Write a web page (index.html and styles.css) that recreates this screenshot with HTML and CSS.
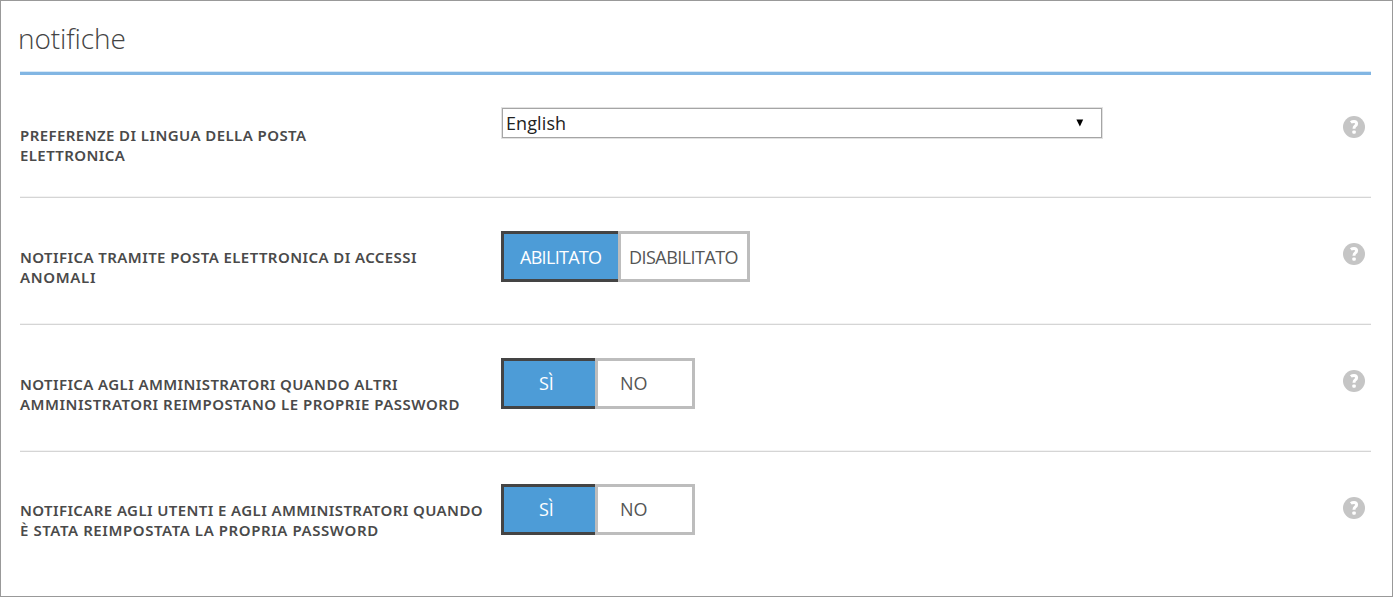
FILE: index.html
```html
<!DOCTYPE html>
<html lang="it">
<head>
<meta charset="utf-8">
<title>notifiche</title>
<link rel="stylesheet" href="styles.css">
</head>
<body>
<main class="panel">
  <h1 class="title"><span class="title-text">notifiche</span></h1>
  <section class="row row-language">
    <div class="label"><span class="l1">PREFERENZE DI LINGUA DELLA POSTA</span><br><span class="l2">ELETTRONICA</span></div>
    <div class="select"><span class="value">English</span><svg class="arrow" width="8" height="8" viewBox="0 0 8 8"><path d="M.4 .4H7.2L3.9 7.6Z"/></svg></div>
    <svg class="help" viewBox="0 0 22 22"><circle cx="11" cy="11" r="11"/><path d="M7.8 6.4Q9.2 5.4 11 5.4Q13.6 5.4 13.6 7.7Q13.6 9 12.2 9.9Q11 10.7 11 12.7"/><rect x="9.3" y="14.4" width="3.5" height="3.4" rx="1.2"/></svg>
  </section>
  <section class="row row-signin">
    <div class="label"><span class="l3">NOTIFICA TRAMITE POSTA ELETTRONICA DI ACCESSI</span><br><span class="l4">ANOMALI</span></div>
    <div class="toggle wide"><div class="on"><span>ABILITATO</span></div><div class="off"><span>DISABILITATO</span></div></div>
    <svg class="help" viewBox="0 0 22 22"><circle cx="11" cy="11" r="11"/><path d="M7.8 6.4Q9.2 5.4 11 5.4Q13.6 5.4 13.6 7.7Q13.6 9 12.2 9.9Q11 10.7 11 12.7"/><rect x="9.3" y="14.4" width="3.5" height="3.4" rx="1.2"/></svg>
  </section>
  <section class="row row-admins">
    <div class="label"><span class="l5">NOTIFICA AGLI AMMINISTRATORI QUANDO ALTRI</span><br><span class="l6">AMMINISTRATORI REIMPOSTANO LE PROPRIE PASSWORD</span></div>
    <div class="toggle"><div class="on"><span>SÌ</span></div><div class="off"><span>NO</span></div></div>
    <svg class="help" viewBox="0 0 22 22"><circle cx="11" cy="11" r="11"/><path d="M7.8 6.4Q9.2 5.4 11 5.4Q13.6 5.4 13.6 7.7Q13.6 9 12.2 9.9Q11 10.7 11 12.7"/><rect x="9.3" y="14.4" width="3.5" height="3.4" rx="1.2"/></svg>
  </section>
  <section class="row row-users">
    <div class="label"><span class="l7">NOTIFICARE AGLI UTENTI E AGLI AMMINISTRATORI QUANDO</span><br><span class="l8">È STATA REIMPOSTATA LA PROPRIA PASSWORD</span></div>
    <div class="toggle"><div class="on"><span>SÌ</span></div><div class="off"><span>NO</span></div></div>
    <svg class="help" viewBox="0 0 22 22"><circle cx="11" cy="11" r="11"/><path d="M7.8 6.4Q9.2 5.4 11 5.4Q13.6 5.4 13.6 7.7Q13.6 9 12.2 9.9Q11 10.7 11 12.7"/><rect x="9.3" y="14.4" width="3.5" height="3.4" rx="1.2"/></svg>
  </section>
</main>
</body>
</html>
```
FILE: styles.css
```css
* { box-sizing: border-box; }
body { margin: 0; background: #fff; font-family: "Open Sans", "Noto Sans", sans-serif; color: #444; }
.panel { height: 597px; border: 1px solid #999; padding: 0 21px 0 19px; overflow: hidden; }
.title { margin: 0; height: 74px; padding-top: 17px; border-bottom: 3px solid #82b6e3; box-shadow: inset 0 -1px #d9e9f7; font-size: 28px; line-height: 40px; font-weight: 300; }
.title-text { margin-left: -2px; letter-spacing: -0.1px; }
.row { display: grid; grid-template-columns: 481px 1fr 22px; height: 127px; padding-right: 6px; align-items: start; border-bottom: 1px solid #d5d5d5; box-shadow: inset 0 -1px #f3f3f3; }
.row-language { height: 123px; }
.row-users { border: 0; box-shadow: none; }
.label { padding-top: 49px; font-family: "Noto Sans", "Open Sans", sans-serif; font-size: 15px; line-height: 20px; font-weight: 600; letter-spacing: 0.4px; white-space: nowrap; color: #4a4a4a; }
.l1, .l3 { letter-spacing: 0.42px; }
.l4 { letter-spacing: 0.65px; }
.l6 { letter-spacing: 0.5px; }
.l8 { letter-spacing: 0.58px; }
.row-language .label { padding-top: 50px; }
.row-users .label { padding-top: 48px; }
.help { width: 22px; height: 22px; margin-top: 45px; }
.row-language .help { margin-top: 40.5px; }
.help circle { fill: #c5c5c5; }
.help path { fill: none; stroke: #fff; stroke-width: 3; }
.help rect { fill: #fff; }
.select { display: flex; align-items: center; justify-content: space-between; width: 600px; height: 30px; margin: 33px 0 0 1px; outline: 1px solid #e2e2e2; border: 1px solid #a5a5a5; padding: 0 17px 0 3px; color: #222; font-size: 18px; line-height: 26px; }
.value { letter-spacing: 0.1px; }
.toggle { display: grid; grid-template-columns: 94px 100px; width: 194px; height: 51px; margin-top: 33px; font-size: 18px; }
.toggle.wide { grid-template-columns: 117px 132px; width: 249px; }
.on, .off { display: flex; align-items: center; white-space: nowrap; padding-bottom: 2px; }
.on { background: #4d9cd7; border: 3px solid #444; border-right: 0; color: #fff; padding-left: 35px; }
.off { border: 3px solid #bdbdbd; color: #555; padding-left: 22px; }
.wide .on, .wide .off { padding-bottom: 0; letter-spacing: -0.55px; }
.wide .on { padding-left: 16px; letter-spacing: -0.7px; }
.wide .off { padding-left: 8px; }
.row-users .toggle { margin-top: 32px; }
```
